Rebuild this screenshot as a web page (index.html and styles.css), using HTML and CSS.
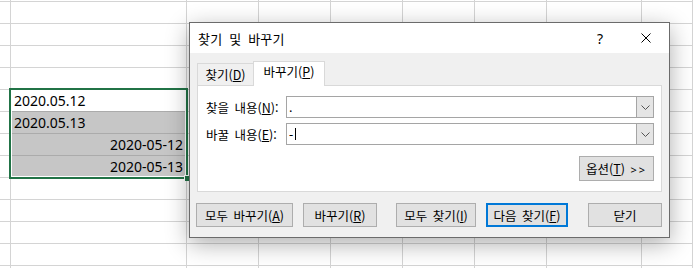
FILE: index.html
```html
<!DOCTYPE html>
<html lang="ko">
<head>
<meta charset="utf-8">
<title>찾기 및 바꾸기</title>
<link rel="stylesheet" href="styles.css">
</head>
<body>
<div class="sheet">
  <div class="row top"><div class="c"></div><div class="c"></div><div class="c"></div><div class="c"></div><div class="c"></div><div class="c"></div><div class="c"></div><div class="c"></div><div class="c"></div></div>
  <div class="row"><div class="c"></div><div class="c"></div><div class="c"></div><div class="c"></div><div class="c"></div><div class="c"></div><div class="c"></div><div class="c"></div><div class="c"></div></div>
  <div class="row"><div class="c"></div><div class="c"></div><div class="c"></div><div class="c"></div><div class="c"></div><div class="c"></div><div class="c"></div><div class="c"></div><div class="c"></div></div>
  <div class="row"><div class="c"></div><div class="c"></div><div class="c"></div><div class="c"></div><div class="c"></div><div class="c"></div><div class="c"></div><div class="c"></div><div class="c"></div></div>
  <div class="row"><div class="c"></div><div class="c"></div><div class="c"></div><div class="c"></div><div class="c"></div><div class="c"></div><div class="c"></div><div class="c"></div><div class="c"></div></div>
  <div class="row"><div class="c"></div><div class="c active">2020.05.12</div><div class="c"></div><div class="c"></div><div class="c"></div><div class="c"></div><div class="c"></div><div class="c"></div><div class="c"></div></div>
  <div class="row"><div class="c"></div><div class="c sel">2020.05.13</div><div class="c"></div><div class="c"></div><div class="c"></div><div class="c"></div><div class="c"></div><div class="c"></div><div class="c"></div></div>
  <div class="row"><div class="c"></div><div class="c sel right">2020-05-12</div><div class="c"></div><div class="c"></div><div class="c"></div><div class="c"></div><div class="c"></div><div class="c"></div><div class="c"></div></div>
  <div class="row"><div class="c"></div><div class="c sel right last">2020-05-13</div><div class="c"></div><div class="c"></div><div class="c"></div><div class="c"></div><div class="c"></div><div class="c"></div><div class="c"></div></div>
  <div class="row"><div class="c"></div><div class="c"></div><div class="c"></div><div class="c"></div><div class="c"></div><div class="c"></div><div class="c"></div><div class="c"></div><div class="c"></div></div>
  <div class="row"><div class="c"></div><div class="c"></div><div class="c"></div><div class="c"></div><div class="c"></div><div class="c"></div><div class="c"></div><div class="c"></div><div class="c"></div></div>
  <div class="row"><div class="c"></div><div class="c"></div><div class="c"></div><div class="c"></div><div class="c"></div><div class="c"></div><div class="c"></div><div class="c"></div><div class="c"></div></div>
  <div class="row"><div class="c"></div><div class="c"></div><div class="c"></div><div class="c"></div><div class="c"></div><div class="c"></div><div class="c"></div><div class="c"></div><div class="c"></div></div>
  <div class="row bottom"><div class="c"></div><div class="c"></div><div class="c"></div><div class="c"></div><div class="c"></div><div class="c"></div><div class="c"></div><div class="c"></div><div class="c"></div></div>
</div>

<div class="selection"><span class="handle"></span></div>

<div class="dialog">
  <div class="titlebar">
    <span class="title">찾기 및 바꾸기</span>
    <span class="tb-btn help">?</span>
    <span class="tb-btn close">
      <svg width="10" height="10" viewBox="0 0 10 10"><path d="M0.5 0.5 L9.5 9.5 M9.5 0.5 L0.5 9.5" stroke="#000" stroke-width="1" fill="none"/></svg>
    </span>
  </div>
  <div class="body">
    <div class="tabs">
      <div class="tab">찾기(<u>D</u>)</div>
      <div class="tab on">바꾸기(<u>P</u>)</div>
    </div>
    <div class="panel">
      <div class="field">
        <label class="lbl">찾을 내용(<u>N</u>):</label>
        <div class="combo"><span class="val">.</span><span class="drop"><svg width="9" height="5" viewBox="0 0 9 5"><path d="M0.5 0.5 L4.5 4.5 L8.5 0.5" stroke="#555" stroke-width="1" fill="none"/></svg></span></div>
      </div>
      <div class="field second">
        <label class="lbl">바꿀 내용(<u>E</u>):</label>
        <div class="combo"><span class="val">-<span class="caret"></span></span><span class="drop"><svg width="9" height="5" viewBox="0 0 9 5"><path d="M0.5 0.5 L4.5 4.5 L8.5 0.5" stroke="#555" stroke-width="1" fill="none"/></svg></span></div>
      </div>
      <div class="opts"><button class="btn opt">옵션(<u>T</u>) <span class="gt">&gt;&gt;</span></button></div>
    </div>
    <div class="buttons">
      <button class="btn b1">모두 바꾸기(<u>A</u>)</button>
      <button class="btn b2">바꾸기(<u>R</u>)</button>
      <button class="btn b3">모두 찾기(<u>I</u>)</button>
      <button class="btn b4 default">다음 찾기(<u>F</u>)</button>
      <button class="btn b5">닫기</button>
    </div>
  </div>
</div>
</body>
</html>
```

FILE: styles.css
```css
* { box-sizing: border-box; }
html, body { margin: 0; padding: 0; }
body {
  width: 693px;
  height: 268px;
  overflow: hidden;
  background: #fff;
  position: relative;
  font-family: "Noto Sans", "Noto Sans CJK KR", sans-serif;
}

.sheet { display: flex; flex-direction: column; }
.row {
  display: grid;
  grid-template-columns: 11px 176px 72px 72px 72px 72px 72px 95px 51px;
  height: 22px;
}
.row.top { height: 2px; }
.row.bottom { height: 2px; }
.row.bottom .c { border-bottom: none; }
.c {
  border-right: 1px solid #d4d4d4;
  border-bottom: 1px solid #d4d4d4;
  font-size: 14px;
  line-height: 21px;
  padding: 0 3px;
  color: #000;
  white-space: nowrap;
  overflow: hidden;
}
.c.active { border-bottom-color: #ababab; }
.c.sel { background: #c6c6c6; border-bottom-color: #ababab; }
.c.right { text-align: right; }

.selection {
  position: absolute;
  left: 9px;
  top: 88px;
  width: 179px;
  height: 91px;
  border: 2px solid #217346;
  box-shadow: inset 0 0 0 1px #fff;
}
.handle {
  position: absolute;
  right: -4px;
  bottom: -4px;
  width: 6px;
  height: 6px;
  background: #217346;
  border-left: 1px solid #fff;
  border-top: 1px solid #fff;
}

.dialog {
  position: absolute;
  left: 189px;
  top: 22px;
  width: 481px;
  height: 216px;
  border: 1px solid #6b6b6b;
  background: #f0f0f0;
  box-shadow: 0 6px 22px rgba(0,0,0,0.32);
  display: flex;
  flex-direction: column;
  font-family: "Noto Sans CJK KR", sans-serif;
  font-size: 12.5px;
  color: #000;
}
.titlebar {
  height: 30px;
  background: #fff;
  display: flex;
  align-items: center;
  padding-left: 8px;
}
.title { flex: 1; font-size: 13px; letter-spacing: 0.2px; word-spacing: 3px; }
.tb-btn {
  width: 46px;
  height: 30px;
  display: flex;
  align-items: center;
  justify-content: center;
}
.help { font-family: "Noto Sans", sans-serif; font-size: 14px; }

.body {
  flex: 1;
  padding: 8px 6px 0 7px;
  display: flex;
  flex-direction: column;
}
.tabs {
  display: flex;
  align-items: flex-end;
  height: 24px;
  position: relative;
  z-index: 1;
}
.tab {
  height: 22px;
  width: 56px;
  padding: 0;
  border: 1px solid #d9d9d9;
  border-bottom: none;
  border-right: none;
  background: #f0f0f0;
  line-height: 21px;
  text-align: center;
  white-space: nowrap;
}
.tab.on {
  width: 72px;
  height: 25px;
  margin-bottom: -1px;
  background: #fff;
  border-right: 1px solid #d9d9d9;
  line-height: 20px;
}
.panel {
  height: 107px;
  margin-right: 1px;
  background: #fff;
  border: 1px solid #d9d9d9;
  padding: 10px 7px 0 8px;
  display: flex;
  flex-direction: column;
}
.field { display: flex; align-items: center; height: 22px; }
.field.second { margin-top: 5px; }
.lbl { width: 80px; word-spacing: 2px; white-space: nowrap; }
.combo {
  flex: 1;
  height: 22px;
  border: 1px solid #a5a5a5;
  background: #fff;
  display: flex;
  align-items: stretch;
}
.val {
  flex: 1;
  padding-left: 2px;
  font-family: "Noto Sans", sans-serif;
  font-size: 13px;
  line-height: 20px;
  display: flex;
  align-items: center;
}
.caret {
  display: inline-block;
  width: 1px;
  height: 12px;
  background: #000;
  margin-left: 2px;
}
.drop {
  width: 17px;
  background: #e5e5e5;
  border-left: 1px solid #a5a5a5;
  display: flex;
  align-items: center;
  justify-content: center;
}
.opts { display: flex; justify-content: flex-end; margin-top: 11px; }

.btn {
  font-family: "Noto Sans CJK KR", sans-serif;
  font-size: 12.5px;
  color: #000;
  background: #e1e1e1;
  border: 1px solid #adadad;
  padding: 0;
  height: 24px;
  word-spacing: 2px;
  white-space: nowrap;
}
.btn.opt { width: 75px; height: 25px; }
.gt { font-family: "Noto Sans", sans-serif; font-size: 11px; letter-spacing: 2px; }
.buttons { display: flex; margin-top: 11px; margin-left: -1px; }
.b1 { width: 97px; }
.b2 { width: 74px; margin-left: 10px; }
.b3 { width: 80px; margin-left: 19px; }
.b4 { width: 82px; margin-left: 10px; }
.b5 { width: 74px; margin-left: 20px; }
.btn.default { border: 2px solid #0078d7; }
u { text-decoration: underline; text-underline-offset: 1px; }
```
